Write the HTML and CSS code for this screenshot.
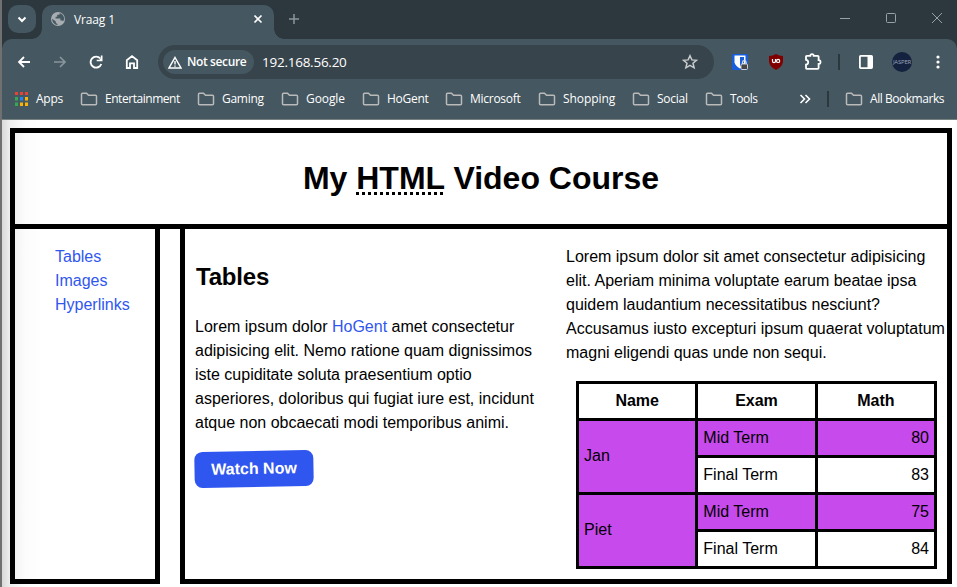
FILE: index.html
```html
<!DOCTYPE html>
<html lang="en">
<head>
<meta charset="utf-8">
<title>Vraag 1</title>
<link rel="stylesheet" href="styles.css">
</head>
<body>
<svg width="0" height="0" class="defs"><defs>
<symbol id="folder" viewBox="0 0 18 14"><path d="M2.5 1.200h4l2 2.100h7q1 0 1 1v7.400q0 1-1 1h-13q-1 0-1-1V2.200q0-1 1-1z" fill="none" stroke="#b9bab9" stroke-width="1.500"/></symbol>
</defs></svg>
<div class="window">
<header class="chrome">
  <div class="tabstrip">
    <button class="tab-search"><svg width="28" height="28"><path d="M10.500 12.500l3.500 3.500 3.500-3.500" fill="none" stroke="#fff" stroke-width="2"/></svg></button>
    <div class="tab">
      <svg width="14" height="14" viewBox="0 0 14 14"><circle cx="7" cy="7" r="7" fill="#a8adb1"/><path d="M8.500 1.200v1.600H6.200v2H4.600v1.700h4.800v2h1.800l1 .8 1-2.300C13 3.700 11.200 1.500 8.500 1.200zM1.300 6.800l3.500 2.800v1.400l1.700 1v1C3.500 12.800 1 10.300 1.300 6.800z" fill="#455760"/></svg>
      <span>Vraag 1</span>
      <svg class="tab-close" width="10" height="10"><path d="M1.500 1.500l7 7m0-7l-7 7" stroke="#fff" stroke-width="1.700"/></svg>
    </div>
    <svg class="new-tab" width="12" height="12"><path d="M6 1v10M1 6h10" stroke="#89959c" stroke-width="1.500"/></svg>
    <div class="controls">
      <svg width="10" height="10"><path d="M0 5.500h10" stroke="#98a1a5"/></svg>
      <svg width="10" height="10"><rect x=".5" y=".5" width="9" height="9" rx="1" fill="none" stroke="#98a1a5"/></svg>
      <svg width="10" height="10"><path d="M0 0l10 10M10 0L0 10" stroke="#98a1a5"/></svg>
    </div>
  </div>
  <div class="toolbar">
    <button class="tool"><svg width="14" height="14"><path d="M13 7H2.200M7 2L2 7l5 5" fill="none" stroke="#fff" stroke-width="1.800"/></svg></button>
    <button class="tool"><svg width="14" height="14"><path d="M1 7h10.800M7 2l5 5-5 5" fill="none" stroke="#89959c" stroke-width="1.700"/></svg></button>
    <button class="tool"><svg width="14" height="14"><path d="M12.300 9A5.500 5.500 0 1 1 11.300 3.500" fill="none" stroke="#fff" stroke-width="1.900"/><path d="M13.500.5v5.800H7.700V4.700h2.800L11.800 3V.5z" fill="#fff"/></svg></button>
    <button class="tool"><svg width="14" height="16"><path d="M1.800 14V6.200L7 2.100l5.200 4.100V14H9V9.300H5V14z" fill="none" stroke="#fff" stroke-width="1.800"/></svg></button>
    <div class="address">
      <div class="security"><svg width="14" height="13"><path d="M7 1.500L13 12H1z" fill="none" stroke="#fff" stroke-width="1.500"/><path d="M7 5v3.500M7 9.500v1.300" stroke="#fff" stroke-width="1.400"/></svg><span>Not secure</span></div>
      <span class="url">192.168.56.20</span>
      <svg class="star" width="16" height="16"><path d="M8 1.700l1.900 4.200 4.600.4-3.500 3 1.100 4.500L8 11.400l-4.100 2.400L5 9.300l-3.500-3 4.600-.4z" fill="none" stroke="#c9ccce" stroke-width="1.500"/></svg>
    </div>
    <button class="tool"><svg width="16" height="16"><rect width="16" height="16" rx="1.500" fill="#175ddc"/><path d="M2.500 1.500h11V8.500Q12.500 12 8 14.500 3.500 12 2.500 8.500z" fill="#fff"/><path d="M8 3h4v5.500Q11 11 8 12.500z" fill="#175ddc"/><rect x="9" y="10" width="6.500" height="5.500" rx="1" fill="#454545" stroke="#ddd" stroke-width=".9"/><path d="M10.500 10V8.500a1.800 1.800 0 0 1 3.600 0V10" fill="none" stroke="#ddd" stroke-width="1.200"/></svg></button>
    <button class="tool"><svg width="14" height="16"><path d="M7 0Q10 2 14 2v5.500Q13.500 13 7 16 .5 13 0 7.500V2Q4 2 7 0z" fill="#800000"/><path d="M3.500 5v2.300q0 1.400 1.500 1.400t1.500-1.400V5" fill="none" stroke="#fff" stroke-width="1.200"/><circle cx="9.100" cy="6.900" r="1.600" fill="none" stroke="#fff" stroke-width="1.200"/></svg></button>
    <button class="tool"><svg class="puzzle" width="18" height="18"><path d="M2 3.500q0-.7.700-.7h3.600q0-1.600 1.700-1.600t1.700 1.600h4.100q.8 0 .8.800v3.600q1.900 0 1.900 1.900t-1.900 1.900v4q0 .8-.8.800H2.700q-.7 0-.7-.8v-3.400q2.200-.3 2.200-2.400T2 6.800z" fill="none" stroke="#fff" stroke-width="1.800"/></svg></button>
    <i class="rule"></i>
    <button class="tool"><svg width="14" height="14"><rect x=".9" y=".9" width="12.200" height="12.200" rx=".8" fill="none" stroke="#fff" stroke-width="1.800"/><path d="M8.500 1H13v12H8.500z" fill="#fff"/></svg></button>
    <button class="tool"><span class="avatar">JASPER</span></button>
    <button class="tool"><svg width="4" height="14"><g fill="#fff"><circle cx="2" cy="2" r="1.600"/><circle cx="2" cy="7" r="1.600"/><circle cx="2" cy="12" r="1.600"/></g></svg></button>
  </div>
  <nav class="bookmarks">
    <a><svg width="13" height="14"><path d="M0 0h3v3H0zM5 0h3v3H5zM10 0h3v3h-3z" fill="#ea4335"/><path d="M0 5h3v3.500H0zM0 10.500h3V14H0z" fill="#34a853"/><path d="M5 5h3v3.500H5z" fill="#2684f5"/><path d="M10 5h3v3.500h-3zM5 10.500h3V14H5zM10 10.500h3V14h-3z" fill="#fbb305"/></svg><span class="l-apps">Apps</span></a>
    <a><svg width="18" height="14"><use href="#folder"/></svg><span class="tight">Entertainment</span></a>
    <a><svg width="18" height="14"><use href="#folder"/></svg><span>Gaming</span></a>
    <a><svg width="18" height="14"><use href="#folder"/></svg><span class="loose">Google</span></a>
    <a><svg width="18" height="14"><use href="#folder"/></svg><span>HoGent</span></a>
    <a><svg width="18" height="14"><use href="#folder"/></svg><span>Microsoft</span></a>
    <a><svg width="18" height="14"><use href="#folder"/></svg><span class="loose">Shopping</span></a>
    <a><svg width="18" height="14"><use href="#folder"/></svg><span>Social</span></a>
    <a><svg width="18" height="14"><use href="#folder"/></svg><span class="tight">Tools</span></a>
    <a><svg width="12" height="10"><path d="M1.500 1l4 4-4 4M6.500 1l4 4-4 4" fill="none" stroke="#fff" stroke-width="1.600"/></svg></a>
    <i class="rule"></i>
    <a><svg width="18" height="14"><use href="#folder"/></svg><span class="tight">All Bookmarks</span></a>
  </nav>
</header>
<div class="page">
  <div class="banner"><h1>My <abbr>HTML</abbr> Video Course</h1></div>
  <div class="columns">
    <nav class="side"><a>Tables</a><a>Images</a><a>Hyperlinks</a></nav>
    <main>
      <section class="intro">
        <h2>Tables</h2>
        <p>Lorem ipsum dolor <a>HoGent</a> amet consectetur<br>adipisicing elit. Nemo ratione quam dignissimos<br>iste cupiditate soluta praesentium optio<br>asperiores, doloribus qui fugiat iure est, incidunt<br>atque non obcaecati modi temporibus animi.</p>
        <button class="watch">Watch Now</button>
      </section>
      <section class="detail">
        <p>Lorem ipsum dolor sit amet consectetur adipisicing<br>elit. Aperiam minima voluptate earum beatae ipsa<br>quidem laudantium necessitatibus nesciunt?<br>Accusamus iusto excepturi ipsum quaerat voluptatum<br>magni eligendi quas unde non sequi.</p>
        <table>
          <tr><th>Name</th><th>Exam</th><th>Math</th></tr>
          <tr class="hl"><td rowspan="2">Jan</td><td>Mid Term</td><td class="num">80</td></tr>
          <tr><td>Final Term</td><td class="num">83</td></tr>
          <tr class="hl"><td rowspan="2">Piet</td><td>Mid Term</td><td class="num">75</td></tr>
          <tr><td>Final Term</td><td class="num">84</td></tr>
        </table>
      </section>
    </main>
  </div>
</div>
</div>
</body>
</html>
```
FILE: styles.css
```css
* { box-sizing: border-box; }
body { margin: 0; overflow: hidden; background: #fff; }
.defs { position: absolute; }
svg { display: block; flex: none; }
button { border: 0; padding: 0; background: none; font: inherit; }
.window { height: 587px; border-left: 2px solid #707070; display: flex; flex-direction: column; }

.chrome { height: 120px; flex: none; border-bottom: 1px solid #75817f; color: #fff; font: 12px/16px "Open Sans", sans-serif; background: linear-gradient(#2d383e 50px, #455760 50px); }
.tabstrip { height: 39px; background: #2d383e; display: flex; align-items: flex-start; padding: 5px 15px 0 6px; }
.tab-search { width: 28px; height: 28px; border-radius: 10px; background: #455760; }
.tab { position: relative; width: 232px; height: 34px; margin-left: 6px; border-radius: 10px 10px 0 0; background: #455760; display: flex; align-items: center; padding: 0 11px 6px 9px; }
.tab::before, .tab::after { content: ""; position: absolute; bottom: 0; width: 10px; height: 10px; }
.tab::before { left: -10px; background: radial-gradient(circle at 0 0, transparent 9.5px, #455760 10px); }
.tab::after { right: -10px; background: radial-gradient(circle at 100% 0, transparent 9.5px, #455760 10px); }
.tab span { margin: 1px 0 0 9px; letter-spacing: -.15px; }
.tab-close { margin-left: auto; }
.new-tab { margin: 8px 0 0 14px; }
.controls { margin: 8px 0 0 auto; display: flex; gap: 36px; }
.toolbar { height: 46px; border-radius: 10px 10px 0 0; background: #455760; display: flex; align-items: center; padding-left: 4px; }
.tool { width: 36px; height: 34px; flex: none; display: flex; align-items: center; justify-content: center; }
.puzzle { position: relative; left: 1px; }
.address { width: 556px; height: 34px; margin: 0 8px; border-radius: 17px; background: #38444b; display: flex; align-items: center; padding: 0 16px 0 5px; }
.security { width: 91px; height: 24px; border-radius: 12px; background: #455760; display: flex; align-items: center; padding-left: 5px; font-weight: 600; letter-spacing: -.38px; }
.security span { margin-left: 5px; white-space: nowrap; }
.url { margin-left: 8px; font-size: 13.5px; letter-spacing: -.25px; }
.star { margin-left: auto; }
.rule { width: 2px; height: 16px; margin: 0 8px; background: #2d383e; }
.avatar { width: 20px; height: 20px; border-radius: 50%; background: #14213f; color: #9ba5b8; font: 6px/20px "Open Sans", sans-serif; text-align: center; overflow: hidden; letter-spacing: -.2px; }
.bookmarks { height: 34px; background: #455760; display: grid; grid-template-columns: 65px 117px 84px 81px 83px 93px 94px 73px 94px 28px 18px auto; align-items: center; padding: 0 0 6px 13px; letter-spacing: -.27px; }
.bookmarks a { display: flex; align-items: center; white-space: nowrap; }
.bookmarks span { margin-left: 7px; }
.bookmarks .l-apps { margin-left: 8px; }
.bookmarks .tight { letter-spacing: -.46px; }
.bookmarks .loose { letter-spacing: -.08px; }
.bookmarks .rule { margin: 0; }

.page { flex: 1; padding: 8px 5px 3px 8px; background: linear-gradient(90deg, #d9d9d9, #eee 8px, #fbfbfb 22px, #fff 40px); color: #000; font: 16px/24px "Liberation Sans", Arial, sans-serif; }
.page a { color: #3056f0; }
.banner { height: 101px; border: 5px solid #000; display: flex; align-items: center; justify-content: center; }
h1 { margin: 0 0 2px; font-size: 32px; line-height: 48px; white-space: nowrap; }
abbr { text-decoration: underline dotted 3px; text-underline-offset: 3px; text-decoration-skip-ink: none; }
.columns { height: 355px; display: flex; justify-content: space-between; }
.side { width: 150px; border: 5px solid #000; border-top: 0; padding: 16px 0 0 40px; display: flex; flex-direction: column; }
main { width: 772px; border: 5px solid #000; border-top: 0; display: flex; white-space: nowrap; }
.intro { width: 381px; padding: 30px 0 0 10px; }
h2 { margin: 0 0 20px 1px; font-size: 24px; line-height: 36px; letter-spacing: -.2px; }
p { margin: 0; }
.watch { width: 119px; height: 36px; margin-top: 16px; border-radius: 8px; background: #3056f0; color: #fff; font-weight: bold; transform: translateX(-.5px) rotate(-1deg); }
.detail { padding-top: 16px; }
table { width: 361px; margin: 16px 0 0 10px; border-collapse: collapse; table-layout: fixed; }
th, td { height: 37px; border: 3px solid #000; padding: 5px; }
td[rowspan] { padding: 4px 5px 6px; }
.hl td { background: #c74aec; }
td { text-align: left; }
.num { text-align: right; }
```
